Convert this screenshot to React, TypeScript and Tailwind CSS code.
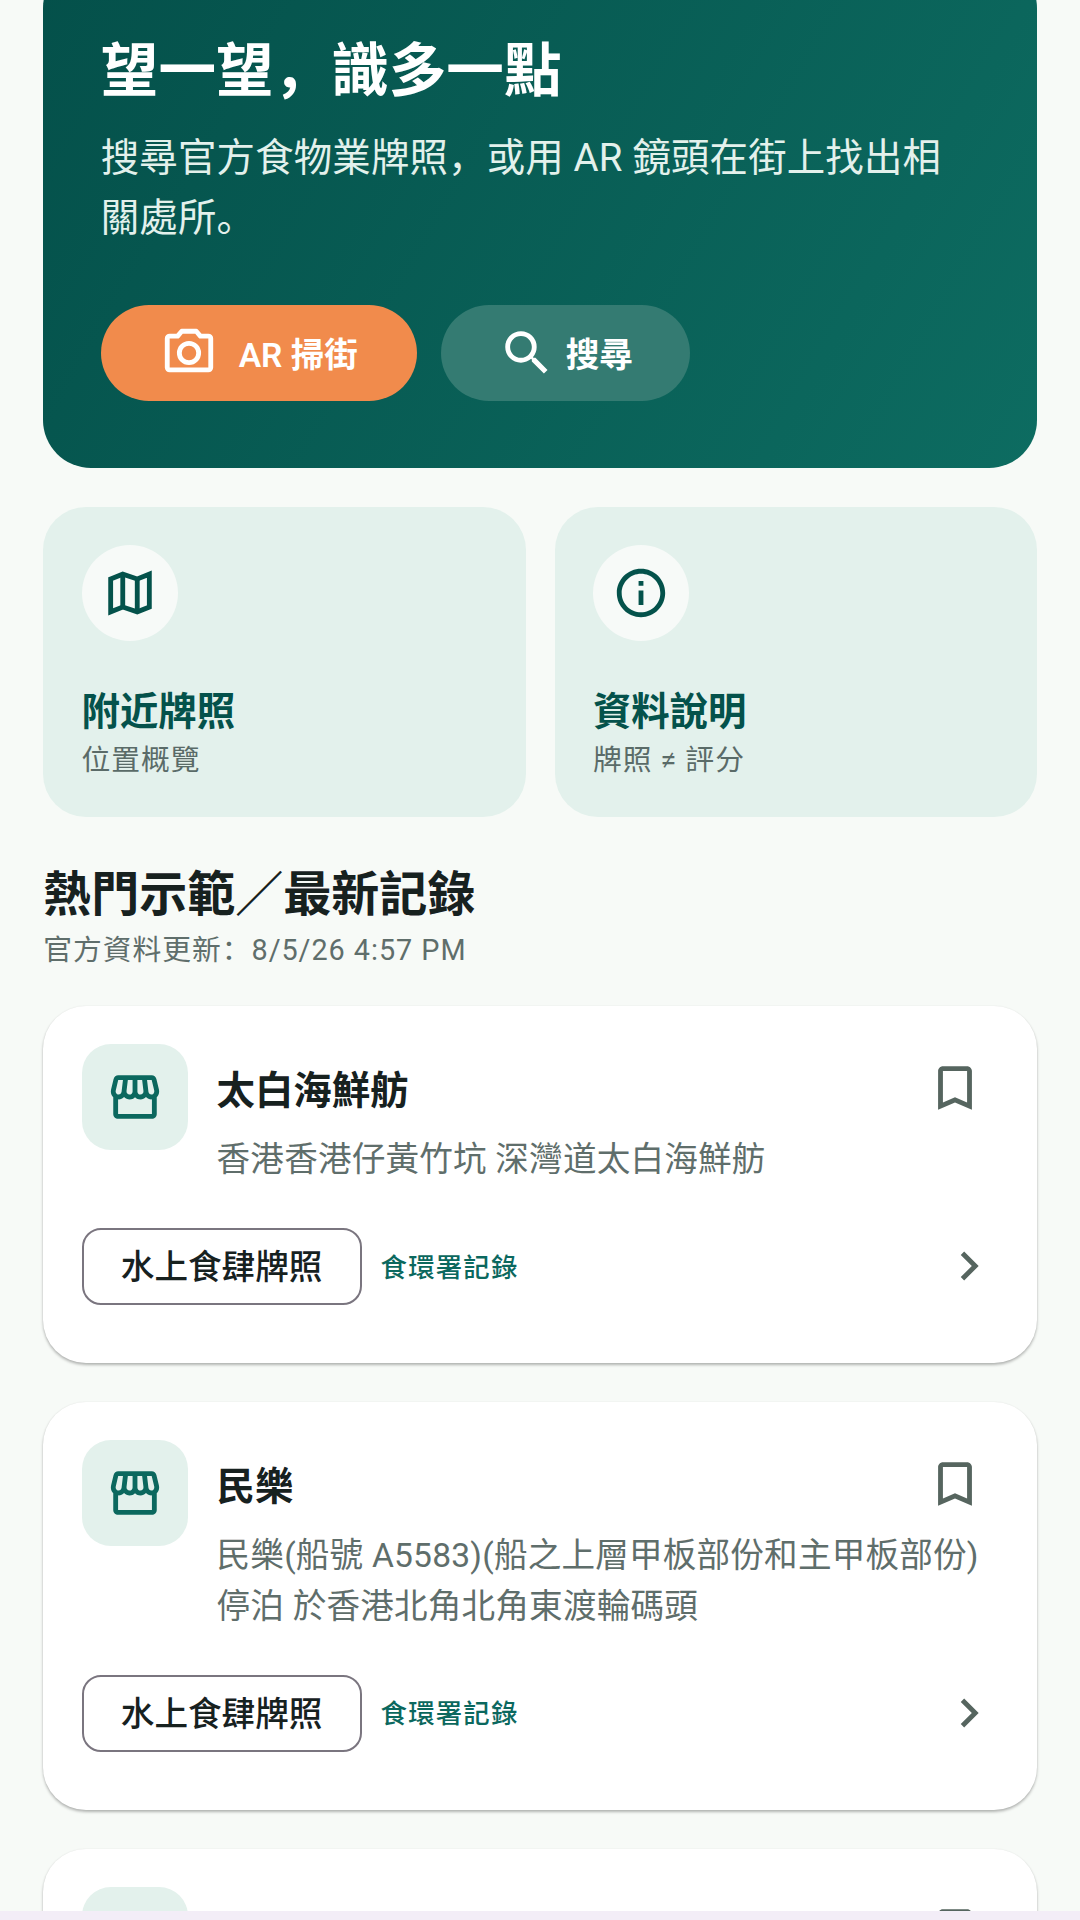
import React from "react";
import { MdInfoOutline, MdOutlineStorefront, MdBookmarkBorder, MdChevronRight, MdSearch } from "react-icons/md";

const cards = [
  { name: "太白海鮮舫", address: ["香港香港仔黃竹坑 深灣道太白海鮮舫"] },
  { name: "民樂", address: ["民樂(船號 A5583)(船之上層甲板部份和主甲板部份)", "停泊 於香港北角北角東渡輪碼頭"] },
  { name: "", address: [""] },
];

function MapIcon() {
  return (
    <svg width="58" height="58" viewBox="0 0 24 24" fill="none" stroke="currentColor" strokeWidth="2" strokeLinejoin="miter">
      <path d="M4 6.2 9 4.2l6 2 5-2v13.6l-5 2-6-2-5 2z" />
      <path d="M9 4.2v13.6M15 6.2v13.6" />
    </svg>
  );
}

function CameraIcon() {
  return (
    <svg width="58" height="58" viewBox="0 0 24 24" fill="none" stroke="currentColor" strokeWidth="2" strokeLinejoin="round">
      <path d="M9 3h6l1.7 2H20a1 1 0 0 1 1 1v12a1 1 0 0 1-1 1H4a1 1 0 0 1-1-1V6a1 1 0 0 1 1-1h3.3z" />
      <circle cx="12" cy="12" r="4" />
    </svg>
  );
}

function Quick({ icon, title, sub }: { icon: React.ReactNode; title: string; sub: string }) {
  return (
    <div className="flex h-[310px] flex-1 flex-col rounded-[43px] bg-[#e3f1ec] p-[38.4px]">
      <div className="flex h-[96px] w-[96px] items-center justify-center rounded-full bg-[#f7faf8] text-[#04524b]">{icon}</div>
      <div className="mt-[46px] text-[38.4px] font-bold leading-[50px] text-[#04524b]">{title}</div>
      <div className="mt-[4px] text-[28.8px] leading-[38px] tracking-[0.96px] text-[#5a6b68]">{sub}</div>
    </div>
  );
}

function Card({ name, address }: { name: string; address: string[] }) {
  return (
    <div className="rounded-[43px] bg-white px-[38.4px] pb-[58px] pt-[38.4px] shadow-[0_2px_3px_rgba(0,0,0,0.28),0_0_2px_rgba(0,0,0,0.06)]">
      <div className="flex gap-[29px]">
        <div className="flex h-[106px] w-[106px] shrink-0 items-center justify-center rounded-[29px] bg-[#e3f1ec] text-[#0b685e]">
          <MdOutlineStorefront size={58} />
        </div>
        <div className="min-w-0 flex-1">
          <div className="mt-[23px] flex h-[48px] items-center justify-between">
            <div className="text-[38.4px] font-semibold leading-[48px] text-[#17211f]">{name}</div>
            <MdBookmarkBorder size={58} className="mr-[14px] mt-[-6px] text-[#56655f]" />
          </div>
          <div className="mt-[18.5px] text-[33.6px] leading-[51px] tracking-[0.2px] text-[#5f6e6b]">
            {address.map((a, i) => <div key={i}>{a || "\u00a0"}</div>)}
          </div>
        </div>
      </div>
      {name && (
        <div className="mt-[43px] flex items-center">
          <div className="flex h-[77px] w-[280px] items-center justify-center rounded-[19px] border-2 border-[#7a757f] pt-[4px] text-[33.6px] font-medium text-[#17211f]">水上食肆牌照</div>
          <div className="ml-[19px] mt-[4px] text-[26.4px] font-medium tracking-[1.2px] text-[#0b685e]">食環署記錄</div>
          <MdChevronRight size={58} className="ml-auto mr-[0px] text-[#56655f]" />
        </div>
      )}
    </div>
  );
}

export default function App() {
  return (
    <div className="flex h-[1920px] w-[1080px] flex-col overflow-hidden bg-[#f7faf7] font-['Roboto','Noto_Sans_CJK_SC',sans-serif]">
      <div className="min-h-0 flex-1 overflow-hidden px-[43.2px]">
        <div className="mt-[-40px] h-[508px] rounded-[48px] bg-linear-[120deg] from-[#04504a] to-[#0d6c61] px-[57.6px] pt-[78px]">
          <div className="text-[57.6px] font-bold leading-[68px] text-white">望一望，識多一點</div>
          <div className="mt-[22px] text-[38.4px] leading-[60px] tracking-[0.2px] text-[#e3f1ec]">搜尋官方食物業牌照，或用 AR 鏡頭在街上找出相關處所。</div>
          <div className="mt-[57px] flex gap-[24px]">
            <div className="flex h-[96px] w-[316px] items-center justify-center gap-[21px] rounded-full bg-[#f18b4c] text-[33.6px] font-semibold text-white">
              <CameraIcon /> <span className="mt-[6px]">AR 掃街</span>
            </div>
            <div className="flex h-[96px] w-[249px] items-center justify-center gap-[10px] rounded-full bg-[#347b72] text-[33.6px] font-semibold text-white">
              <MdSearch size={58} /> <span className="mt-[6px]">搜尋</span>
            </div>
          </div>
        </div>
        <div className="mt-[39px] flex gap-[29px]">
          <Quick icon={<MapIcon />} title="附近牌照" sub="位置概覽" />
          <Quick icon={<MdInfoOutline size={58} />} title="資料說明" sub="牌照 ≠ 評分" />
        </div>
        <div className="mt-[48px] text-[48px] font-bold leading-[60px] text-[#17211f]">熱門示範／最新記錄</div>
        <div className="mt-[5px] text-[28.8px] leading-[40px] tracking-[0.96px] text-[#5f6e6b]">官方資料更新：8/5/26 4:57 PM</div>
        <div className="mt-[36px] flex flex-col gap-[39px]">
          {cards.map((c, i) => <Card key={i} {...c} />)}
        </div>
      </div>
      <div className="h-[9px] shrink-0 bg-[#f3edf7]" />
    </div>
  );
}
